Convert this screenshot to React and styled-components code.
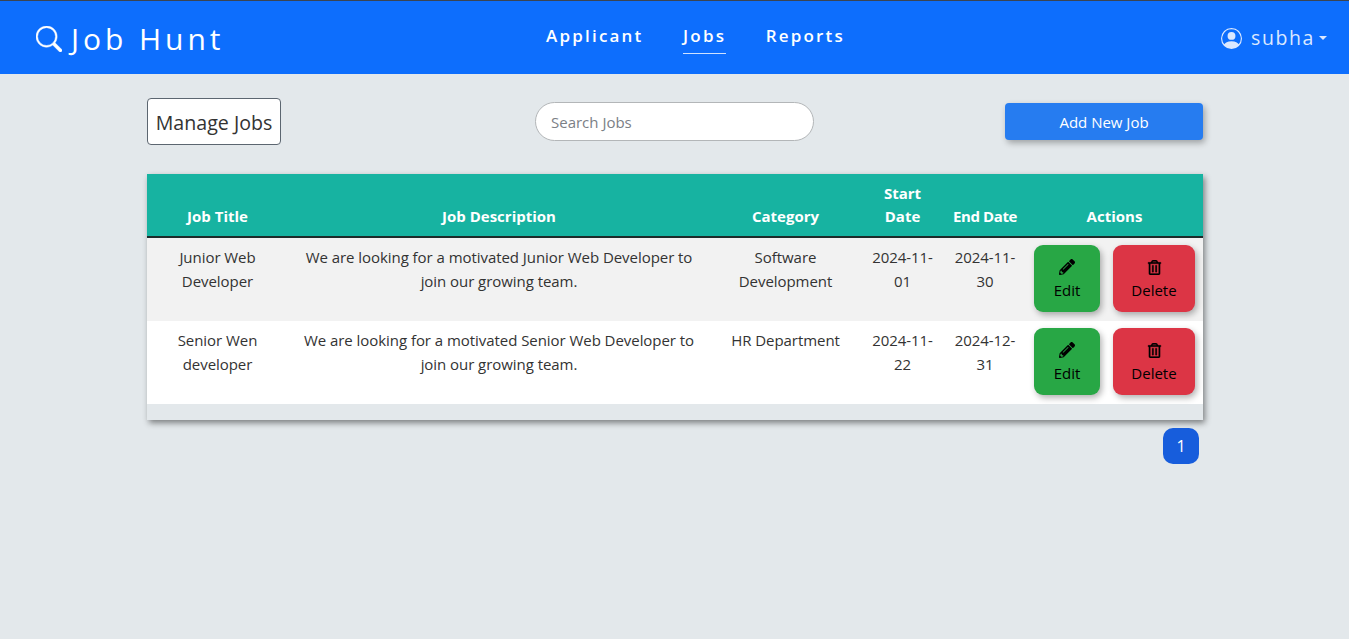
import React from 'react';
import styled, { createGlobalStyle } from 'styled-components';
import { BsSearch, BsPersonCircle } from 'react-icons/bs';
import { FaPencilAlt, FaRegTrashAlt } from 'react-icons/fa';

const GlobalStyle = createGlobalStyle`
  * { box-sizing: border-box; }
  html, body { margin: 0; padding: 0; }
  body {
    background: #e3e8eb;
    color: #333;
    font-family: "Open Sans", "Noto Sans", sans-serif;
    font-size: 15px;
    line-height: 24px;
    min-height: 639px;
  }
`;

const Header = styled.header`
  display: grid;
  grid-template-columns: 510px auto 1fr;
  align-items: center;
  height: 74px;
  padding: 0 22px 0 36px;
  background: #0d6efd;
  border-top: 1px solid #3a4452;
  color: #fff;
`;

const Logo = styled.div`
  display: flex;
  align-items: center;
  gap: 9px;
  padding-top: 2px;
  font-size: 30px;
  letter-spacing: 3.95px;
  line-height: 40px;
  svg {
    font-size: 26px;
    stroke: currentColor;
    stroke-width: 0.3px;
  }
`;

const Nav = styled.nav`
  display: flex;
  gap: 39.5px;
`;

const NavLink = styled.a`
  padding-bottom: 3px;
  font-size: 17px;
  font-weight: 600;
  letter-spacing: 2.2px;
  line-height: 28px;
  border-bottom: 1px solid ${props => (props.$active ? '#cfe2ff' : 'transparent')};
`;

const UserMenu = styled.div`
  justify-self: end;
  display: flex;
  align-items: center;
  gap: 9px;
  padding-top: 1px;
  font-size: 19.5px;
  letter-spacing: 1.6px;
  color: #dbe8ff;
  svg { font-size: 21px; }
`;

const Caret = styled.span`
  width: 0;
  height: 0;
  margin-left: -5px;
  border-top: 4.5px solid #dbe8ff;
  border-left: 4.5px solid transparent;
  border-right: 4.5px solid transparent;
`;

const Main = styled.main`
  width: 1056px;
  margin: 0 0 0 147px;
`;

const Toolbar = styled.div`
  display: grid;
  grid-template-columns: 388px 279px 1fr;
  align-items: center;
  height: 47px;
  margin-top: 24px;
`;

const Title = styled.h1`
  justify-self: start;
  width: 134px;
  margin: 0;
  height: 47px;
  background: #fff;
  border: 1px solid #5c6670;
  border-radius: 4px;
  font-size: 19.6px;
  font-weight: 400;
  line-height: 47px;
  text-align: center;
  white-space: nowrap;
`;

const SearchInput = styled.input`
  width: 279px;
  height: 39px;
  padding: 0 15px;
  background: #fff;
  border: 1px solid #b3b6b8;
  border-radius: 20px;
  font: inherit;
  font-size: 15px;
  outline: none;
  &::placeholder { color: #7b8086; }
`;

const AddButton = styled.button`
  justify-self: end;
  width: 198px;
  height: 37px;
  background: #267cf0;
  border: none;
  border-radius: 4px;
  box-shadow: 2px 3px 6px rgba(0, 0, 0, 0.3);
  color: #fff;
  font: inherit;
  font-size: 15px;
`;

const TableCard = styled.div`
  margin-top: 29px;
  padding-bottom: 16px;
  box-shadow: 2px 3px 6px rgba(0, 0, 0, 0.45);
`;

const Table = styled.table`
  width: 100%;
  table-layout: fixed;
  border-collapse: separate;
  border-spacing: 0;
`;

const Col = styled.col`
  width: ${props => props.$w}px;
`;

const Th = styled.th`
  padding: 8px;
  height: 64px;
  vertical-align: bottom;
  background: #17b3a1;
  border-bottom: 2px solid #1d2b2a;
  color: #fff;
  font-size: 15px;
  font-weight: 700;
  line-height: 23px;
  text-align: center;
  white-space: ${props => (props.$nowrap ? 'nowrap' : 'normal')};
  letter-spacing: ${props => (props.$nowrap ? '-0.4px' : '0')};
`;

const Row = styled.tr`
  background: ${props => (props.$striped ? '#f2f2f2' : '#fff')};
`;

const Td = styled.td`
  padding: 7px 8px 8px;
  height: 83px;
  vertical-align: top;
  text-align: center;
  font-size: 15px;
  letter-spacing: -0.05px;
`;

const Actions = styled.div`
  display: flex;
  justify-content: center;
  gap: 13px;
`;

const ActionButton = styled.button`
  display: flex;
  flex-direction: column;
  align-items: center;
  justify-content: center;
  gap: 3px;
  width: ${props => props.$w}px;
  height: 67px;
  padding: 4px 0 0;
  background: ${props => props.$bg};
  border: none;
  border-radius: 9px;
  box-shadow: 2px 3px 6px rgba(0, 0, 0, 0.3);
  color: #000;
  font: inherit;
  font-size: 15px;
`;

const IconSlot = styled.span`
  display: flex;
  align-items: center;
  justify-content: center;
  height: 15px;
`;

const TrashIcon = styled(FaRegTrashAlt)`
  stroke: currentColor;
  stroke-width: 10px;
`;

const Pager = styled.div`
  display: flex;
  justify-content: flex-end;
  margin: 8px 4px 0 0;
`;

const PageButton = styled.button`
  width: 36px;
  height: 36px;
  padding: 0;
  background: #175ddc;
  border: none;
  border-radius: 10px;
  color: #fff;
  font: inherit;
  font-size: 16px;
`;

const columns = [
  { label: 'Job Title', w: 141 },
  { label: 'Job Description', w: 422 },
  { label: 'Category', w: 151 },
  { label: 'Start Date', w: 83 },
  { label: 'End Date', w: 82, nowrap: true },
  { label: 'Actions', w: 177 },
];

const jobs = [
  {
    title: 'Junior Web Developer',
    description: 'We are looking for a motivated Junior Web Developer to join our growing team.',
    category: 'Software Development',
    start: '2024-11-01',
    end: '2024-11-30',
  },
  {
    title: 'Senior Wen developer',
    description: 'We are looking for a motivated Senior Web Developer to join our growing team.',
    category: 'HR Department',
    start: '2024-11-22',
    end: '2024-12-31',
  },
];

const App = () => (
  <>
    <GlobalStyle />
    <Header>
      <Logo>
        <BsSearch />
        Job Hunt
      </Logo>
      <Nav>
        <NavLink>Applicant</NavLink>
        <NavLink $active>Jobs</NavLink>
        <NavLink>Reports</NavLink>
      </Nav>
      <UserMenu>
        <BsPersonCircle />
        subha
        <Caret />
      </UserMenu>
    </Header>
    <Main>
      <Toolbar>
        <Title>Manage Jobs</Title>
        <SearchInput placeholder="Search Jobs" />
        <AddButton>Add New Job</AddButton>
      </Toolbar>
      <TableCard>
        <Table>
          <colgroup>
            {columns.map(col => (
              <Col key={col.label} $w={col.w} />
            ))}
          </colgroup>
          <thead>
            <tr>
              {columns.map(col => (
                <Th key={col.label} $nowrap={col.nowrap}>{col.label}</Th>
              ))}
            </tr>
          </thead>
          <tbody>
            {jobs.map((job, i) => (
              <Row key={job.title} $striped={i % 2 === 0}>
                <Td>{job.title}</Td>
                <Td>{job.description}</Td>
                <Td>{job.category}</Td>
                <Td>{job.start}</Td>
                <Td>{job.end}</Td>
                <Td>
                  <Actions>
                    <ActionButton $w={66} $bg="#28a745">
                      <IconSlot><FaPencilAlt size={16} /></IconSlot>
                      Edit
                    </ActionButton>
                    <ActionButton $w={82} $bg="#dc3545">
                      <IconSlot><TrashIcon size={15} /></IconSlot>
                      Delete
                    </ActionButton>
                  </Actions>
                </Td>
              </Row>
            ))}
          </tbody>
        </Table>
      </TableCard>
      <Pager>
        <PageButton>1</PageButton>
      </Pager>
    </Main>
  </>
);

export default App;
